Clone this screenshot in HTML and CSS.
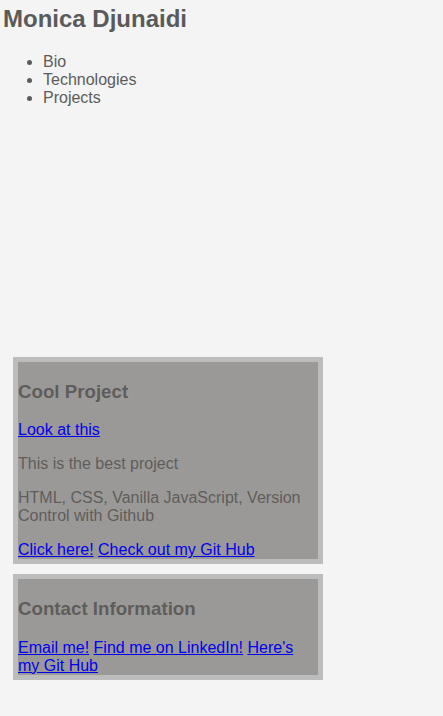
FILE: index.html
```html
<!DOCTYPE html>
<html lang="en">
<head>
<meta charset="utf-8">
<title>Monica Djunaidi</title>
<link rel="stylesheet" href="styles.css">
</head>
<body>
<header class="site-header">
  <h1 class="name">Monica Djunaidi</h1>
  <ul class="nav-list">
    <li>Bio</li>
    <li>Technologies</li>
    <li>Projects</li>
  </ul>
</header>
<main class="content">
  <section class="card">
    <div class="card-inner">
      <h3 class="card-title">Cool Project</h3>
      <p class="card-text card-text-first"><a href="#">Look at this</a></p>
      <p class="card-text">This is the best project</p>
      <p class="card-text">HTML, CSS, Vanilla JavaScript, Version Control with Github</p>
      <div class="card-links"><a href="#">Click here!</a> <a href="#">Check out my Git Hub</a></div>
    </div>
  </section>
  <section class="card">
    <div class="card-inner">
      <h3 class="card-title">Contact Information</h3>
      <div class="card-links"><a href="#">Email me!</a> <a href="#">Find me on LinkedIn!</a> <a href="#">Here's my Git Hub</a></div>
    </div>
  </section>
</main>
</body>
</html>
```
FILE: styles.css
```css
html {
  background: #f4f4f4;
}

body {
  margin: 0;
  padding: 0 3px;
  font-family: "Liberation Sans", Arial, sans-serif;
  font-size: 16px;
  color: #5c5c5c;
}

.site-header {
  display: block;
}

.name {
  font-size: 24px;
  font-weight: bold;
  margin: 5px 0 20px;
  color: #5a5a5a;
}

.nav-list {
  margin: 0;
  padding-left: 40px;
}

.content {
  margin-top: 250px;
  padding-left: 10px;
  display: flex;
  flex-direction: column;
  gap: 10px;
}

.card {
  width: 300px;
  border: 5px solid #bcbcbc;
  background: #9b9997;
}

.card-inner {
  color: #5f5d5b;
}

.card-title {
  font-size: 18.72px;
  margin: 18.72px 0;
}

.card-text {
  margin: 16px 0;
}

.card-text-first {
  margin-top: 17px;
}

.card-links {
  margin: 0;
}

a {
  color: #0000ee;
}
```
